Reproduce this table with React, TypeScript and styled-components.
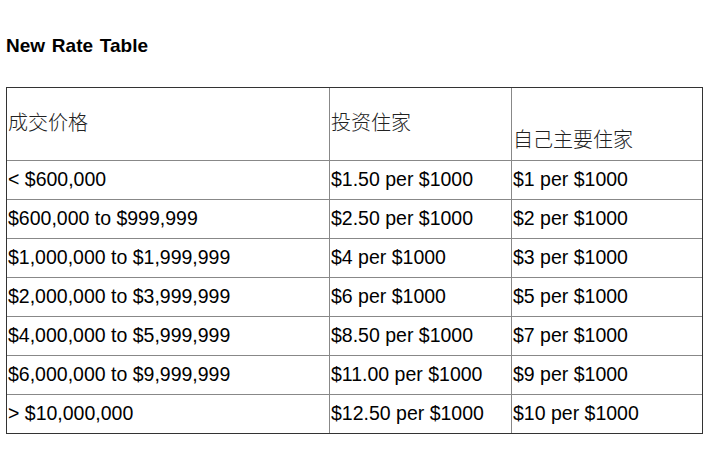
import React from "react";
import styled, { createGlobalStyle } from "styled-components";

const GlobalStyle = createGlobalStyle`
  html, body {
    margin: 0;
    padding: 0;
    background: #ffffff;
  }
  body {
    font-family: "Liberation Sans", Arial, sans-serif;
    color: #000000;
  }
`;

const Page = styled.main`
  padding: 35px 6px 0 6px;
`;

const Heading = styled.h3`
  margin: 0 0 30px 0;
  font-size: 19px;
  line-height: 22px;
  font-weight: bold;
  word-spacing: 1.5px;
`;

const Table = styled.table`
  width: 697px;
  table-layout: fixed;
  border: 1px solid #333333;
  border-spacing: 0;
  border-collapse: separate;
`;

const HeadCell = styled.th<{ $drop?: boolean; $w: number }>`
  box-sizing: border-box;
  width: ${(p) => p.$w}px;
  height: 72px;
  padding: ${(p) => (p.$drop ? "41px" : "24px")} 1px 0 1px;
  vertical-align: top;
  text-align: left;
  font-family: "Noto Sans CJK SC", "Liberation Serif", serif;
  font-size: 20px;
  line-height: 20px;
  font-weight: 300;
  color: #222222;
  border-left: 1px solid #888888;
  &:first-child {
    border-left: none;
  }
`;

const Cell = styled.td`
  box-sizing: border-box;
  height: 39px;
  padding: 0 1px 2px 1px;
  vertical-align: middle;
  font-size: 19.5px;
  line-height: 22px;
  white-space: nowrap;
  border-top: 1px solid #888888;
  border-left: 1px solid #888888;
  &:first-child {
    border-left: none;
  }
`;

const rows: [string, string, string][] = [
  ["< $600,000", "$1.50 per $1000", "$1 per $1000"],
  ["$600,000 to $999,999", "$2.50 per $1000", "$2 per $1000"],
  ["$1,000,000 to $1,999,999", "$4 per $1000", "$3 per $1000"],
  ["$2,000,000 to $3,999,999", "$6 per $1000", "$5 per $1000"],
  ["$4,000,000 to $5,999,999", "$8.50 per $1000", "$7 per $1000"],
  ["$6,000,000 to $9,999,999", "$11.00 per $1000", "$9 per $1000"],
  ["> $10,000,000", "$12.50 per $1000", "$10 per $1000"],
];

export default function App() {
  return (
    <>
      <GlobalStyle />
      <Page>
        <Heading>New Rate Table</Heading>
        <Table>
          <thead>
            <tr>
              <HeadCell $w={322}>成交价格</HeadCell>
              <HeadCell $w={182}>投资住家</HeadCell>
              <HeadCell $w={191} $drop>
                自己主要住家
              </HeadCell>
            </tr>
          </thead>
          <tbody>
            {rows.map((r) => (
              <tr key={r[0]}>
                <Cell>{r[0]}</Cell>
                <Cell>{r[1]}</Cell>
                <Cell>{r[2]}</Cell>
              </tr>
            ))}
          </tbody>
        </Table>
      </Page>
    </>
  );
}
